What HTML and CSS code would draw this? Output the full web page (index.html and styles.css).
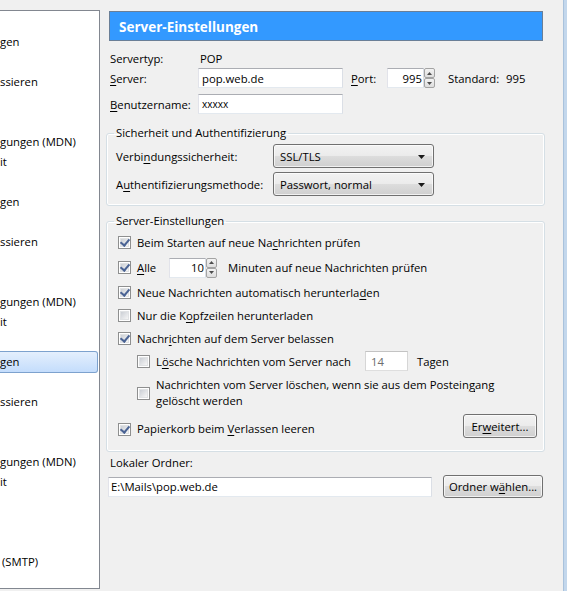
FILE: index.html
```html
<!DOCTYPE html>
<html lang="de">
<head>
<meta charset="utf-8">
<title>Server-Einstellungen</title>
<link rel="stylesheet" href="styles.css">
</head>
<body>
<div class="window">
  <aside class="tree">
    <div class="item"></div>
    <div class="item">gen</div>
    <div class="item"></div>
    <div class="item">ssieren</div>
    <div class="item"></div>
    <div class="item"></div>
    <div class="item">gungen (MDN)</div>
    <div class="item">it</div>
    <div class="item"></div>
    <div class="item">gen</div>
    <div class="item"></div>
    <div class="item">ssieren</div>
    <div class="item"></div>
    <div class="item"></div>
    <div class="item">gungen (MDN)</div>
    <div class="item">it</div>
    <div class="item"></div>
    <div class="item selected">gen</div>
    <div class="item"></div>
    <div class="item">ssieren</div>
    <div class="item"></div>
    <div class="item"></div>
    <div class="item">gungen (MDN)</div>
    <div class="item">it</div>
    <div class="item"></div>
    <div class="item"></div>
    <div class="item"></div>
    <div class="item smtp">(SMTP)</div>
  </aside>

  <main class="content">
    <div class="banner">Server-Einstellungen</div>

    <div class="frow row-type">
      <span class="lbl">Servertyp:</span>
      <span class="val">POP</span>
    </div>
    <div class="frow row-server">
      <span class="lbl"><u>S</u>erver:</span>
      <span class="textbox w-host">pop.web.de</span>
      <span class="lbl-port"><u>P</u>ort:</span>
      <span class="spin port">
        <span class="textbox spin-field right">995</span>
        <span class="spin-btns">
          <span class="sb up"><svg width="5" height="3" viewBox="0 0 5 3"><path d="M0 3 L2.5 0 L5 3Z" fill="#4d4d4d"/></svg></span>
          <span class="sb down"><svg width="5" height="3" viewBox="0 0 5 3"><path d="M0 0 L2.5 3 L5 0Z" fill="#4d4d4d"/></svg></span>
        </span>
      </span>
      <span class="std">Standard:</span>
      <span class="std-val">995</span>
    </div>
    <div class="frow row-user">
      <span class="lbl"><u>B</u>enutzername:</span>
      <span class="textbox w-host small">xxxxx</span>
    </div>

    <fieldset class="group g-sec">
      <legend>Sicherheit und Authentifizierung</legend>
      <div class="grow first">
        <span class="glbl">Verbi<u>n</u>dungssicherheit:</span>
        <span class="dropdown">SSL/TLS<svg class="arrow" width="7" height="4" viewBox="0 0 7 4"><path d="M0 0 H7 L3.5 4Z" fill="#1a1a1a"/></svg></span>
      </div>
      <div class="grow">
        <span class="glbl">A<u>u</u>thentifizierungsmethode:</span>
        <span class="dropdown">Passwort, normal<svg class="arrow" width="7" height="4" viewBox="0 0 7 4"><path d="M0 0 H7 L3.5 4Z" fill="#1a1a1a"/></svg></span>
      </div>
    </fieldset>

    <fieldset class="group g-srv">
      <legend>Server-Einstellungen</legend>
      <div class="crow r1">
        <span class="cb checked"></span><span>Beim Starten auf neue Na<u>c</u>hrichten prüfen</span>
      </div>
      <div class="crow r2">
        <span class="cb checked"></span><span class="alle"><u>A</u>lle</span>
        <span class="spin mins">
          <span class="textbox spin-field right">10</span>
          <span class="spin-btns">
            <span class="sb up"><svg width="5" height="3" viewBox="0 0 5 3"><path d="M0 3 L2.5 0 L5 3Z" fill="#4d4d4d"/></svg></span>
            <span class="sb down"><svg width="5" height="3" viewBox="0 0 5 3"><path d="M0 0 L2.5 3 L5 0Z" fill="#4d4d4d"/></svg></span>
          </span>
        </span>
        <span class="minuten">Minuten auf neue Nachrichten prüfen</span>
      </div>
      <div class="crow r3">
        <span class="cb checked"></span><span>Neue Nachrichten automatisch herunterla<u>d</u>en</span>
      </div>
      <div class="crow r4">
        <span class="cb"></span><span>Nur die K<u>o</u>pfzeilen herunterladen</span>
      </div>
      <div class="crow r5">
        <span class="cb checked"></span><span>Nachr<u>i</u>chten auf dem Server belassen</span>
      </div>
      <div class="crow sub r6">
        <span class="cb"></span><span>L<u>ö</u>sche Nachrichten vom Server nach</span>
        <span class="textbox disabled days">14</span>
        <span class="tagen">Tagen</span>
      </div>
      <div class="crow sub r7">
        <span class="cb"></span><span class="wrap">Nachrichten vom Server löschen, wenn sie aus dem Postein<u>g</u>ang<br>gelöscht werden</span>
      </div>
      <div class="crow r8">
        <span class="cb checked"></span><span class="pk">Papierkorb beim <u>V</u>erlassen leeren</span>
        <span class="button btn-adv">Er<u>w</u>eitert...</span>
      </div>
    </fieldset>

    <div class="local-lbl">Lokaler Ordner:</div>
    <div class="local-row">
      <span class="textbox local-path">E:\Mails\pop.web.de</span>
      <span class="button btn-folder">Ordner w<u>ä</u>hlen...</span>
    </div>
  </main>
  <div class="edge"></div>
</div>
</body>
</html>
```
FILE: styles.css
```css
* { box-sizing: border-box; }
html, body { margin: 0; padding: 0; }
body {
  background: #f0f0f0;
  font-family: "Open Sans", "Noto Sans", "DejaVu Sans", sans-serif;
  font-size: 11.3px;
  color: #000;
  width: 567px;
  height: 591px;
  overflow: hidden;
}
u { text-decoration: underline; text-underline-offset: 2px; }

.window {
  display: flex;
  height: 591px;
}

/* left tree */
.tree {
  width: 100px;
  flex: none;
  margin-top: 10px;
  height: 579px;
  background: #fff;
  border: 1px solid #828790;
  border-left: none;
  padding-top: 1px;
  overflow: hidden;
}
.item {
  height: 20px;
  line-height: 20px;
  white-space: nowrap;
}
.item.selected {
  margin-top: -1px;
  height: 22px;
  line-height: 20px;
  margin-bottom: -1px;
  margin-right: 1px;
  background: linear-gradient(#e4effd, #c4ddfc);
  border: 1px solid #7da2ce;
  border-left: none;
  border-radius: 0 3px 3px 0;
}
.item.smtp { padding-left: 2px; }

/* main area */
.content {
  flex: 1;
  padding: 0 20px 0 9px;
}
.edge {
  width: 4px;
  flex: none;
  background: #c3d7ec;
  border-left: 1px solid #a9c2dc;
}
.banner {
  margin-top: 11px;
  height: 30px;
  background: #3399ff;
  border: 1px solid #6a7f97;
  color: #fff;
  font-weight: bold;
  font-size: 13.5px;
  line-height: 30px;
  padding-left: 9px;
}

.frow {
  display: flex;
  align-items: center;
}
.row-type { margin-top: 8px; height: 18px; }
.row-server { margin-top: 1px; height: 20px; }
.row-user { margin-top: 6px; height: 20px; }
.lbl { width: 89px; padding-left: 1px; flex: none; }
.val { padding-left: 2px; }

.textbox {
  display: inline-flex;
  align-items: center;
  background: #fff;
  border: 1px solid;
  border-color: #abadb3 #dbdfe6 #e3e9ef #e2e3ea;
  height: 20px;
  padding: 0 3px;
  white-space: nowrap;
}
.textbox.small { font-size: 10px; }
.w-host { width: 145px; }
.lbl-port { margin-left: 8px; width: 36px; }
.spin { display: inline-flex; height: 20px; }
.spin-field { justify-content: flex-end; padding-right: 1px; }
.port .spin-field { width: 37px; }
.spin-btns {
  display: flex;
  flex-direction: column;
  width: 11px;
  height: 20px;
}
.sb {
  flex: 1;
  display: flex;
  align-items: center;
  justify-content: center;
  background: linear-gradient(#f3f3f3, #dedede);
  border: 1px solid #a3a3a3;
  border-radius: 2px;
}
.std { margin-left: 13px; width: 58px; }

/* groups */
.group {
  margin: 0 -2px 0 -3px;
  border: 1px solid #d5dfe5;
  border-radius: 3px;
  padding: 0 7px;
  box-shadow: inset 0 0 0 1px #fff;
}
.group legend {
  padding: 0 2px;
  line-height: 16px;
}
.g-sec { margin-top: 11px; padding-bottom: 9px; }
.grow {
  display: flex;
  align-items: center;
  height: 24px;
  margin-top: 4px;
  padding-left: 2px;
}
.grow.first { margin-top: 3px; }
.glbl { width: 157px; flex: none; }
.dropdown {
  position: relative;
  display: flex;
  align-items: center;
  width: 161px;
  height: 24px;
  padding-left: 6px;
  border: 1px solid #707070;
  border-radius: 3px;
  background: linear-gradient(#f2f2f2 0%, #ebebeb 50%, #dddddd 50%, #cfcfcf 100%);
  box-shadow: inset 0 0 0 1px rgba(255,255,255,0.7);
}
.dropdown .arrow { position: absolute; right: 8px; top: 10px; }

.g-srv { margin-top: 7px; padding-bottom: 12px; }
.crow {
  display: flex;
  align-items: center;
  height: 20px;
  margin-top: 4px;
  padding-left: 4px;
  white-space: nowrap;
}
.crow.sub { padding-left: 23px; }
.r1 { margin-top: 3px; }
.r2 { height: 21px; margin-top: 5px; }
.r4 { margin-top: 3px; }
.r5 { margin-top: 3px; }
.r6 { margin-top: 3px; }
.r7 { margin-top: 6px; height: 32px; }
.r7 .wrap { line-height: 16px; }
.r8 { margin-top: 5px; height: 25px; align-items: flex-end; }
.r8 .cb { margin-bottom: 3px; }
.r8 .pk { line-height: 20px; }

.cb {
  flex: none;
  width: 13px;
  height: 13px;
  margin-right: 6px;
  border: 1px solid #8e8f8f;
  background: #fff;
  position: relative;
}
.cb::before {
  content: "";
  position: absolute;
  inset: 1px;
  background: linear-gradient(135deg, #cbcfd5, #f6f6f6);
  border: 1px solid #e0e2e4;
}
.cb.checked::after {
  content: "";
  position: absolute;
  left: 3px;
  top: 0px;
  width: 4px;
  height: 7px;
  border: solid #4a6394;
  border-width: 0 2px 2px 0;
  transform: rotate(40deg);
}
.alle { width: 32px; }
.mins .spin-field { width: 37px; }
.minuten { margin-left: 11px; }
.days {
  margin-left: 14px;
  width: 43px;
  color: #6d6d6d;
  padding-left: 5px;
  border-color: #c3c3c3 #d6d6d6 #dedede #d6d6d6;
}
.tagen { margin-left: 9px; }

.button {
  display: inline-flex;
  align-items: center;
  justify-content: center;
  height: 24px;
  border: 1px solid #707070;
  border-radius: 3px;
  background: linear-gradient(#f2f2f2 0%, #ebebeb 50%, #dddddd 50%, #cfcfcf 100%);
  box-shadow: inset 0 0 0 1px rgba(255,255,255,0.7);
  white-space: nowrap;
}
.btn-adv { align-self: flex-start; margin-left: auto; margin-right: 0; width: 74px; }

.local-lbl {
  margin-top: 3px;
  height: 16px;
  line-height: 16px;
  padding-left: 1px;
}
.local-row {
  display: flex;
  align-items: center;
  margin-top: 4px;
  height: 23px;
}
.local-path { width: 324px; margin-left: -1px; height: 20px; padding-left: 2px; }
.btn-folder { margin-left: 11px; width: 100px; height: 23px; }
```
